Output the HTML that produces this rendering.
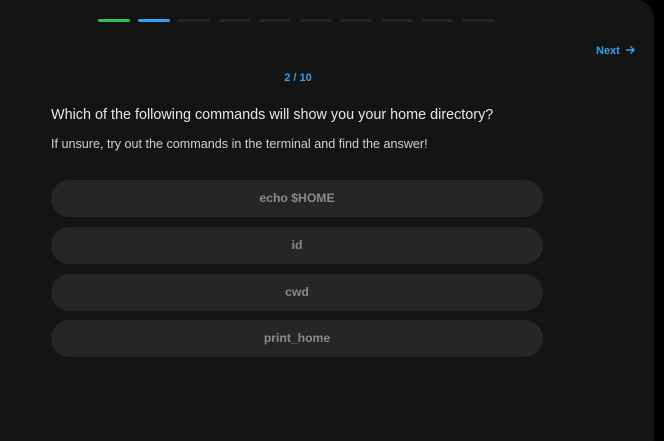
<!DOCTYPE html>
<html><head><style>
html,body{margin:0;padding:0;background:#000;width:664px;height:441px;overflow:hidden;font-family:"Liberation Sans",sans-serif}
.panel{position:absolute;left:0;top:0;width:654px;height:441px;background:#141414;border-top-right-radius:18px}
.seg{position:absolute;top:19px;height:3px;width:32px;border-radius:2px;background:#262626}
.next{position:absolute;left:596px;top:45px;color:#2ea3f2;font-size:11px;font-weight:bold}
.cnt{position:absolute;left:0;width:596px;text-align:center;top:72px;color:#2ea3f2;font-size:11px;font-weight:bold}
.q{position:absolute;left:51px;top:107px;color:#e6e6e6;font-size:14.4px}
.s{position:absolute;left:51px;top:137px;color:#d0d0d0;font-size:12.6px}
.b{position:absolute;left:51px;width:492px;height:37px;border-radius:19px;background:#262626;color:#8a8a8a;font-size:12.2px;font-weight:bold;text-align:center;line-height:37px}
</style></head><body>
<div class="panel">
<div class="seg" style="left:98px;background:#2fbf5c"></div>
<div class="seg" style="left:138px;background:#2ea3f2"></div>
<div class="seg" style="left:178px"></div>
<div class="seg" style="left:219px"></div>
<div class="seg" style="left:259px"></div>
<div class="seg" style="left:300px"></div>
<div class="seg" style="left:340px"></div>
<div class="seg" style="left:381px"></div>
<div class="seg" style="left:421px"></div>
<div class="seg" style="left:462px"></div>
<div class="next">Next <svg width="10" height="10" viewBox="0 0 10 10" style="vertical-align:-1px;margin-left:2px"><path d="M1 5H9M5.5 1.5L9 5L5.5 8.5" stroke="#2ea3f2" stroke-width="1.4" fill="none"/></svg></div>
<div class="cnt">2 / 10</div>
<div class="q">Which of the following commands will show you your home directory?</div>
<div class="s">If unsure, try out the commands in the terminal and find the answer!</div>
<div class="b" style="top:180px">echo $HOME</div>
<div class="b" style="top:227px">id</div>
<div class="b" style="top:274px">cwd</div>
<div class="b" style="top:320px">print_home</div>
</div>
</body></html>
